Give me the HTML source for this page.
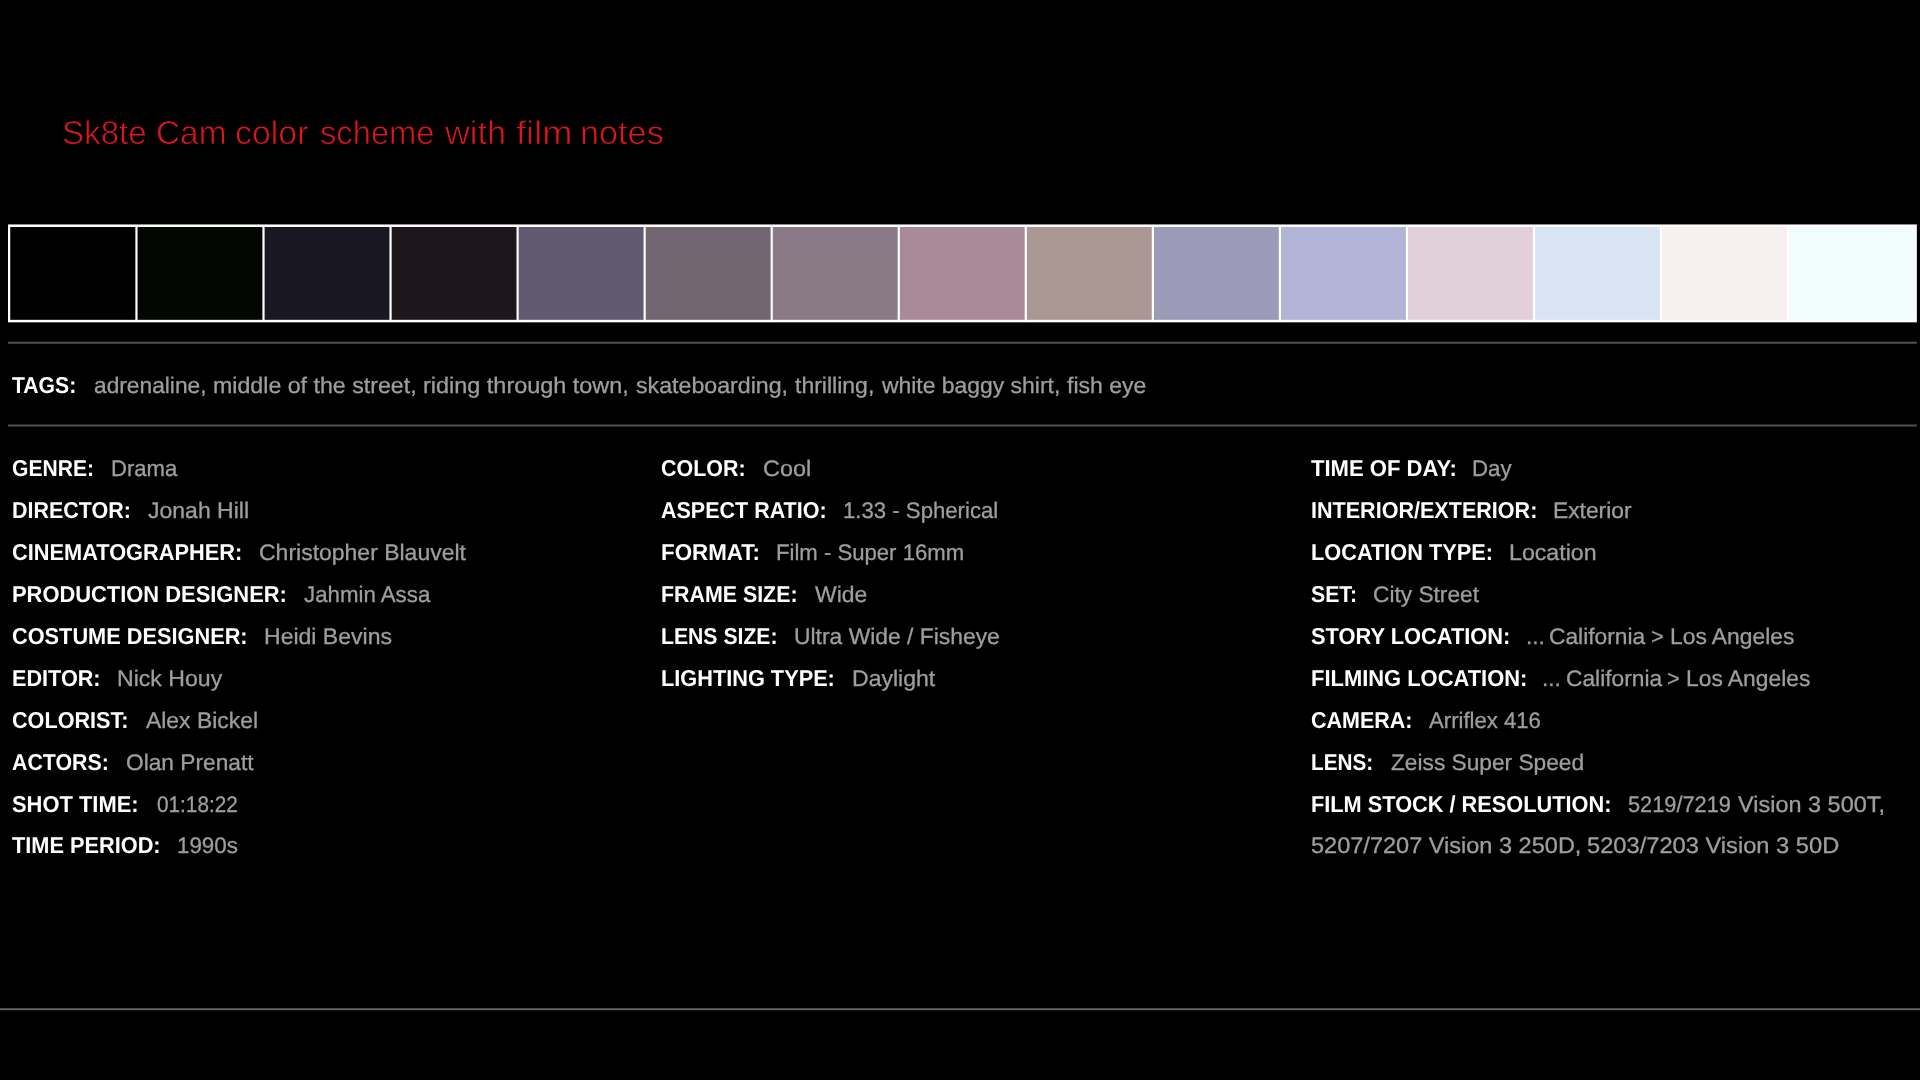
<!DOCTYPE html>
<html lang="en">
<head>
<meta charset="utf-8">
<title>Sk8te Cam color scheme with film notes</title>
<style>
html,body{margin:0;padding:0;background:#000;}
body{width:1920px;height:1080px;position:relative;overflow:hidden;font-family:"Liberation Sans",sans-serif;}
.txt{position:absolute;left:0;top:0;width:1920px;height:1080px;will-change:transform;text-rendering:geometricPrecision;}
.t,.b,.r{position:absolute;white-space:pre;margin:0;transform-origin:0 0;}
.b{font-weight:bold;color:#fff;font-size:23.0px;line-height:26px;}
.r{font-weight:normal;color:#9e9e9e;font-size:22.5px;line-height:25px;-webkit-text-stroke:0.3px #9e9e9e;}
.t{font-weight:normal;color:#dc161d;font-size:33.0px;line-height:37px;-webkit-text-stroke:0.7px #000;}
.gfx{position:absolute;left:0;top:0;display:block;}
</style>
</head>
<body>

<svg class="gfx" width="1920" height="1080" viewBox="0 0 1920 1080">
<rect x="8.0" y="224.45" width="1908.85" height="97.88" fill="#fff"/>
<rect x="10.25" y="227.0" width="125.10" height="92.83" fill="#000000"/>
<rect x="137.55" y="227.0" width="124.85" height="92.83" fill="#040604"/>
<rect x="264.60" y="227.0" width="124.85" height="92.83" fill="#191722"/>
<rect x="391.65" y="227.0" width="124.85" height="92.83" fill="#1d161b"/>
<rect x="518.70" y="227.0" width="124.85" height="92.83" fill="#5f5a6f"/>
<rect x="645.75" y="227.0" width="124.85" height="92.83" fill="#736673"/>
<rect x="772.80" y="227.0" width="124.85" height="92.83" fill="#8a7a88"/>
<rect x="899.85" y="227.0" width="124.85" height="92.83" fill="#a88b96"/>
<rect x="1026.90" y="227.0" width="124.85" height="92.83" fill="#aa9793"/>
<rect x="1153.95" y="227.0" width="124.85" height="92.83" fill="#9b9ab7"/>
<rect x="1281.00" y="227.0" width="124.85" height="92.83" fill="#b1b4d7"/>
<rect x="1408.05" y="227.0" width="124.85" height="92.83" fill="#e2d0d8"/>
<rect x="1535.10" y="227.0" width="124.85" height="92.83" fill="#d9e5f3"/>
<rect x="1662.15" y="227.0" width="124.85" height="92.83" fill="#f6f0f0"/>
<rect x="1789.20" y="227.0" width="125.50" height="92.83" fill="#f1fdfd"/>
<rect x="8" y="341.7" width="1908.85" height="2.1" fill="#4d4d4d"/>
<rect x="8" y="424.45" width="1908.85" height="2.1" fill="#4d4d4d"/>
<rect x="0" y="1008.2" width="1920" height="2" fill="#606060"/>
</svg>
<div class="txt">
<span class="b" style="left:12.00px;top:372px;transform:scaleX(0.9196)">TAGS:</span>
<span class="r" style="left:93.75px;top:373px;transform:scaleX(1.0106)">adrenaline,</span>
<span class="r" style="left:212.72px;top:373px;transform:scaleX(1.0302)">middle of the street,</span>
<span class="r" style="left:423.46px;top:373px;transform:scaleX(1.0416)">riding through town,</span>
<span class="r" style="left:636.25px;top:373px;transform:scaleX(1.0301)">skateboarding,</span>
<span class="r" style="left:795.00px;top:373px;transform:scaleX(1.0226)">thrilling,</span>
<span class="r" style="left:881.77px;top:373px;transform:scaleX(1.0181)">white baggy shirt,</span>
<span class="r" style="left:1067.00px;top:373px;transform:scaleX(1.0224)">fish eye</span>
<span class="b" style="left:12.00px;top:455px;transform:scaleX(0.9169)">GENRE:</span>
<span class="r" style="left:110.82px;top:456px;transform:scaleX(0.9821)">Drama</span>
<span class="b" style="left:12.00px;top:497px;transform:scaleX(0.9332)">DIRECTOR:</span>
<span class="r" style="left:148.30px;top:498px;transform:scaleX(1.0225)">Jonah Hill</span>
<span class="b" style="left:12.00px;top:539px;transform:scaleX(0.9468)">CINEMATOGRAPHER:</span>
<span class="r" style="left:258.98px;top:540px;transform:scaleX(1.0215)">Christopher Blauvelt</span>
<span class="b" style="left:12.00px;top:581px;transform:scaleX(0.9518)">PRODUCTION DESIGNER:</span>
<span class="r" style="left:304.00px;top:582px;transform:scaleX(0.9900)">Jahmin Assa</span>
<span class="b" style="left:12.00px;top:623px;transform:scaleX(0.9454)">COSTUME DESIGNER:</span>
<span class="r" style="left:263.98px;top:624px;transform:scaleX(1.0234)">Heidi Bevins</span>
<span class="b" style="left:12.00px;top:665px;transform:scaleX(0.9408)">EDITOR:</span>
<span class="r" style="left:116.67px;top:666px;transform:scaleX(1.0266)">Nick Houy</span>
<span class="b" style="left:12.00px;top:707px;transform:scaleX(0.9405)">COLORIST:</span>
<span class="r" style="left:145.70px;top:708px;transform:scaleX(1.0180)">Alex Bickel</span>
<span class="b" style="left:12.00px;top:749px;transform:scaleX(0.9280)">ACTORS:</span>
<span class="r" style="left:125.69px;top:750px;transform:scaleX(1.0098)">Olan Prenatt</span>
<span class="b" style="left:12.00px;top:791px;transform:scaleX(0.9526)">SHOT TIME:</span>
<span class="r" style="left:156.70px;top:792px;transform:scaleX(0.9223)">01:18:22</span>
<span class="b" style="left:12.00px;top:832px;transform:scaleX(0.9453)">TIME PERIOD:</span>
<span class="r" style="left:176.71px;top:833px;transform:scaleX(0.9924)">1990s</span>
<span class="b" style="left:661.00px;top:455px;transform:scaleX(0.9321)">COLOR:</span>
<span class="r" style="left:762.96px;top:456px;transform:scaleX(1.0389)">Cool</span>
<span class="b" style="left:661.00px;top:497px;transform:scaleX(0.9343)">ASPECT RATIO:</span>
<span class="r" style="left:843.01px;top:498px;transform:scaleX(0.9853)">1.33 - Spherical</span>
<span class="b" style="left:661.00px;top:539px;transform:scaleX(0.9719)">FORMAT:</span>
<span class="r" style="left:776.32px;top:540px;transform:scaleX(0.9834)">Film - Super 16mm</span>
<span class="b" style="left:661.00px;top:581px;transform:scaleX(0.9292)">FRAME SIZE:</span>
<span class="r" style="left:815.00px;top:582px;transform:scaleX(1.0187)">Wide</span>
<span class="b" style="left:661.00px;top:623px;transform:scaleX(0.9211)">LENS SIZE:</span>
<span class="r" style="left:793.98px;top:624px;transform:scaleX(1.0162)">Ultra Wide / Fisheye</span>
<span class="b" style="left:661.00px;top:665px;transform:scaleX(0.9449)">LIGHTING TYPE:</span>
<span class="r" style="left:851.68px;top:666px;transform:scaleX(1.0242)">Daylight</span>
<span class="b" style="left:1310.50px;top:455px;transform:scaleX(0.9588)">TIME OF DAY:</span>
<span class="r" style="left:1472.31px;top:456px;transform:scaleX(0.9909)">Day</span>
<span class="b" style="left:1310.50px;top:497px;transform:scaleX(0.9372)">INTERIOR/EXTERIOR:</span>
<span class="r" style="left:1553.29px;top:498px;transform:scaleX(1.0126)">Exterior</span>
<span class="b" style="left:1310.50px;top:539px;transform:scaleX(0.9458)">LOCATION TYPE:</span>
<span class="r" style="left:1508.97px;top:540px;transform:scaleX(1.0293)">Location</span>
<span class="b" style="left:1310.50px;top:581px;transform:scaleX(0.9236)">SET:</span>
<span class="r" style="left:1373.29px;top:582px;transform:scaleX(1.0088)">City Street</span>
<span class="b" style="left:1310.50px;top:623px;transform:scaleX(0.9495)">STORY LOCATION:</span>
<span class="b" style="left:1310.50px;top:665px;transform:scaleX(0.9533)">FILMING LOCATION:</span>
<span class="r" style="left:1525.69px;top:624px;transform:scaleX(1.0063)">...</span>
<span class="r" style="left:1548.99px;top:624px;transform:scaleX(1.0124)">California</span>
<span class="r" style="left:1650.73px;top:624px;transform:scaleX(0.9667)">&gt;</span>
<span class="r" style="left:1669.69px;top:624px;transform:scaleX(1.0140)">Los Angeles</span>
<span class="r" style="left:1542.29px;top:666px;transform:scaleX(1.0063)">...</span>
<span class="r" style="left:1565.59px;top:666px;transform:scaleX(1.0124)">California</span>
<span class="r" style="left:1667.33px;top:666px;transform:scaleX(0.9667)">&gt;</span>
<span class="r" style="left:1686.29px;top:666px;transform:scaleX(1.0140)">Los Angeles</span>
<span class="b" style="left:1310.50px;top:707px;transform:scaleX(0.9332)">CAMERA:</span>
<span class="r" style="left:1429.30px;top:708px;transform:scaleX(0.9834)">Arriflex 416</span>
<span class="b" style="left:1310.50px;top:749px;transform:scaleX(0.9014)">LENS:</span>
<span class="r" style="left:1390.70px;top:750px;transform:scaleX(1.0092)">Zeiss Super Speed</span>
<span class="b" style="left:1310.50px;top:791px;transform:scaleX(0.9454)">FILM STOCK / RESOLUTION:</span>
<span class="r" style="left:1628.30px;top:792px;transform:scaleX(0.9675)">5219/7219</span>
<span class="r" style="left:1738.30px;top:792px;transform:scaleX(1.0431)">Vision 3 500T,</span>
<span class="r" style="left:1310.90px;top:833px;transform:scaleX(1.0459)">5207/7207 Vision 3 250D,</span>
<span class="r" style="left:1587.30px;top:833px;transform:scaleX(1.0521)">5203/7203 Vision 3 50D</span>
<span class="t" style="left:61.95px;top:114px;transform:scaleX(1.0045)">Sk8te</span>
<span class="t" style="left:156.14px;top:114px;transform:scaleX(1.0106)">Cam</span>
<span class="t" style="left:234.92px;top:114px;transform:scaleX(1.0264)">color</span>
<span class="t" style="left:320.45px;top:114px;transform:scaleX(0.9913)">scheme</span>
<span class="t" style="left:445.39px;top:114px;transform:scaleX(1.0406)">with</span>
<span class="t" style="left:516.35px;top:114px;transform:scaleX(1.0997)">film</span>
<span class="t" style="left:580.07px;top:114px;transform:scaleX(1.0380)">notes</span>
</div>
</body>
</html>
